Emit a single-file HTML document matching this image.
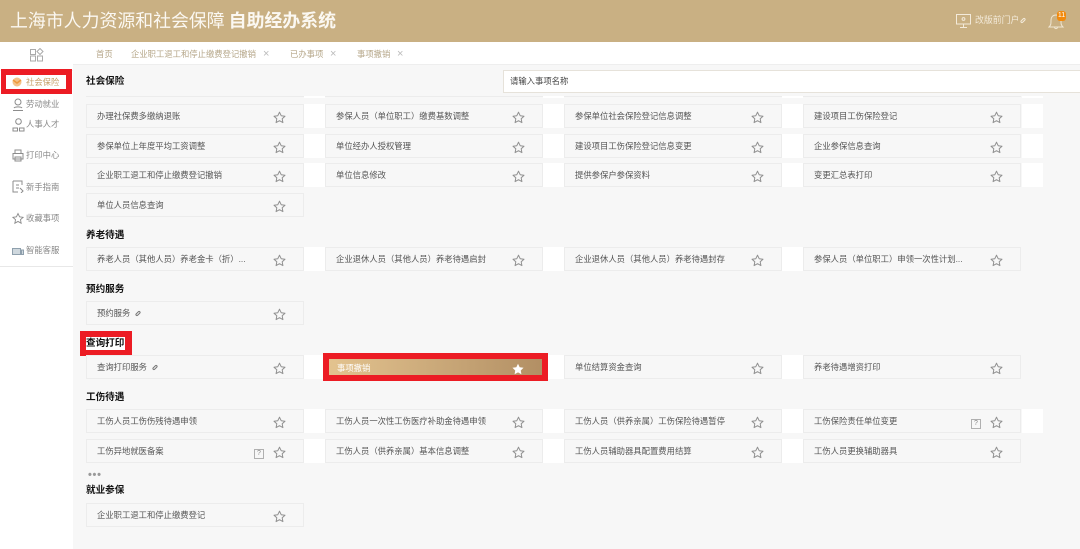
<!DOCTYPE html>
<html lang="zh-CN"><head><meta charset="utf-8"><title>上海市人力资源和社会保障 自助经办系统</title>
<style>
*{box-sizing:border-box}
html,body{margin:0;padding:0}
html{background:#f7f7f7}
body{width:1080px;height:549px;overflow:hidden;position:relative;background:#f7f7f7;font-family:"Liberation Sans","Noto Sans CJK SC",sans-serif;color:#555;font-size:8.33px;filter:blur(.35px)}
.a,.s,.c,.h,.n,.w,.t{position:absolute}
.hd{position:absolute;left:0;top:0;width:1080px;height:42px;background:#c9b083;color:#fff}
.side{position:absolute;left:0;top:42px;width:73px;height:507px;background:#fff}
.tabs{position:absolute;left:73px;top:42px;width:1007px;height:23px;background:#fff;border-bottom:1px solid #eeeeee}
.c{width:218px;height:24px;background:#f7f7f7;border:1px solid #ececec;line-height:23px;padding-left:10px;white-space:nowrap;color:#555}
.c svg{position:absolute;left:186px;top:6px;width:13px;height:13px}
.w{width:21px;height:24px;background:#fff}
.h{left:86px;font-size:9.6px;font-weight:bold;color:#111;line-height:14px;white-space:nowrap;margin-top:1px}
.n{left:26px;color:#888;line-height:12px;white-space:nowrap}
.t{top:48px;color:#b5a688;line-height:12px;white-space:nowrap}
.x{color:#bbb;font-size:11px;font-weight:normal}
.q{position:absolute;width:10px;height:10px;top:8px;border:1px solid #b0b0b0;font-size:7px;line-height:8px;text-align:center;color:#888;padding:0}
.li{display:inline-block;width:6px;height:3px;border:1px solid #777;border-radius:2px;transform:rotate(-45deg);margin-left:5px;vertical-align:1px}
.bx{position:absolute;background:#ec1c24}
svg.i{position:absolute;fill:none;stroke:#8c8c8c;stroke-width:1}
</style></head><body>
<svg width="0" height="0" style="position:absolute"><defs><path id="st" d="M6.500 1.200l1.700 3.500 3.800.5-2.800 2.600.7 3.800-3.400-1.900-3.400 1.900.7-3.800L1 5.200l3.800-.5z" fill="none" stroke="#909090" stroke-width="1" stroke-linejoin="round"/></defs></svg>

<div class="hd">
<div class="a" style="left:10px;top:9px;font-size:17.9px;line-height:24px;white-space:nowrap;color:#fbf8f2">上海市人力资源和社会保障 <b style="margin-left:-1px">自助经办系统</b></div>
<svg class="a" style="left:956px;top:13px" width="16" height="16" viewBox="0 0 16 16" fill="none" stroke="#f3eada"><rect x=".5" y="1.500" width="14" height="9.500"/><circle cx="7.500" cy="6" r="1.400"/><path d="M7.500 11v3M4 14.500h7"/></svg>
<div class="a" style="left:975px;top:14px;line-height:12px;font-size:8.9px;color:#f3eada;white-space:nowrap">改版前门户<span class="li" style="border-color:#f3eada;margin-left:1px;vertical-align:1px"></span></div>
<svg class="a" style="left:1048px;top:12px" width="17" height="18" viewBox="0 0 17 18" fill="none" stroke="#f0e6d2"><path d="M1 15c2-2 2-3 2-6.500C3 5 5 3 8 3s5 2 5 5.500c0 3.500 0 4.500 2 6.500zM6.500 15.500c.5 1.500 2.500 1.500 3 0"/></svg>
<div class="a" style="left:1057px;top:11px;width:9px;height:10px;border-radius:3px;background:#f18a0e;color:#fff;font-size:7px;line-height:10px;text-align:center">11</div>
</div>

<div class="side">
<svg class="a" style="left:30px;top:6px" width="14" height="14" viewBox="0 0 14 14" fill="none" stroke="#aaa"><rect x=".5" y="1.500" width="5" height="5"/><rect x=".5" y="8" width="5" height="5"/><rect x="7.500" y="8" width="5" height="5"/><path d="M10 .5l3 3-3 3-3-3z"/></svg>
<div class="a" style="left:0;top:28px;width:73px;height:1px;background:#f3f3f3"></div>
<div class="a" style="left:0;top:224px;width:73px;height:1px;background:#e8e8e8"></div>
</div>

<div class="bx" style="left:1px;top:69px;width:71px;height:25px"></div>
<div class="a" style="left:6px;top:75px;width:60px;height:14px;background:#fff"></div>
<svg class="a" style="left:11px;top:76px" width="12" height="12" viewBox="0 0 12 12"><circle cx="6" cy="6" r="4.500" fill="#f3c38a"/><path d="M2 4l4 3 4-3" stroke="#ef9a3c" stroke-width="1.500" fill="none"/></svg>
<div class="n" style="top:76px;color:#c5a06a">社会保险</div>
<div class="n" style="top:98px">劳动就业</div>
<div class="n" style="top:118px">人事人才</div>
<div class="n" style="top:149px">打印中心</div>
<div class="n" style="top:181px">新手指南</div>
<div class="n" style="top:212px">收藏事项</div>
<div class="n" style="top:244px">智能客服</div>
<svg class="i" style="left:12px;top:98px" width="12" height="13" viewBox="0 0 12 13"><circle cx="6" cy="4" r="3"/><path d="M1 12.500h10M2 10c1-1.500 7-1.500 8 0"/></svg>
<svg class="i" style="left:12px;top:118px" width="13" height="14" viewBox="0 0 13 14"><circle cx="6.500" cy="3.500" r="2.800"/><path d="M1 13V10h4.500v3zM7.500 13V10H12v3z"/></svg>
<svg class="i" style="left:12px;top:149px" width="12" height="13" viewBox="0 0 12 13"><path d="M3 4V1h6v3M1 10V4.500h10V10zM3 8h6v4H3z"/></svg>
<svg class="i" style="left:12px;top:180px" width="12" height="13" viewBox="0 0 12 13"><path d="M1 1h9v4M1 1v11h5M4 5h3M4 8h3M8 8l3 3-2 2"/></svg>
<svg class="i" style="left:12px;top:212px" width="12" height="13" viewBox="0 0 13 13"><path d="M6.500 1.200l1.700 3.500 3.800.5-2.800 2.600.7 3.800-3.400-1.900-3.400 1.900.7-3.800L1 5.200l3.800-.5z"/></svg>
<svg class="i" style="left:12px;top:246px;stroke:#8fa0ad" width="12" height="11" viewBox="0 0 12 11"><path d="M.5 2.500h8v6h-8zM9.500 4h2v4.500h-2z" fill="#cfd8de"/></svg>

<div class="tabs"></div>
<div class="t" style="left:96px">首页</div>
<div class="t" style="left:131px">企业职工退工和停止缴费登记撤销</div>
<div class="t x" style="left:263px">×</div>
<div class="t" style="left:290px">已办事项</div>
<div class="t x" style="left:330px">×</div>
<div class="t" style="left:357px">事项撤销</div>
<div class="t x" style="left:397px">×</div>

<div class="h" style="top:74px">社会保险</div>
<div class="a" style="left:503px;top:70px;width:577px;height:23px;background:#fff;border:1px solid #e6e2da;border-right:0;padding-left:6px;line-height:21px;color:#444">请输入事项名称</div>

<div class="a" style="left:86px;top:96px;width:218px;height:1px;background:#ececec"></div>
<div class="a" style="left:325px;top:96px;width:218px;height:1px;background:#ececec"></div>
<div class="a" style="left:564px;top:96px;width:218px;height:1px;background:#ececec"></div>
<div class="a" style="left:803px;top:96px;width:218px;height:1px;background:#ececec"></div>
<div class="w" style="left:304px;top:96px;height:2px"></div><div class="w" style="left:543px;top:96px;height:2px"></div><div class="w" style="left:782px;top:96px;height:2px"></div><div class="w" style="left:1022px;top:96px;height:2px"></div>

<!-- white strips -->
<div class="w" style="left:304px;top:104px"></div><div class="w" style="left:543px;top:104px"></div><div class="w" style="left:782px;top:104px"></div><div class="w" style="left:1022px;top:104px"></div>
<div class="w" style="left:304px;top:134px"></div><div class="w" style="left:543px;top:134px"></div><div class="w" style="left:782px;top:134px"></div><div class="w" style="left:1022px;top:134px"></div>
<div class="w" style="left:304px;top:163px"></div><div class="w" style="left:543px;top:163px"></div><div class="w" style="left:782px;top:163px"></div><div class="w" style="left:1022px;top:163px"></div>
<div class="w" style="left:304px;top:247px"></div><div class="w" style="left:543px;top:247px"></div><div class="w" style="left:782px;top:247px"></div>
<div class="w" style="left:304px;top:355px"></div><div class="w" style="left:543px;top:355px"></div><div class="w" style="left:782px;top:355px"></div>
<div class="w" style="left:304px;top:409px"></div><div class="w" style="left:543px;top:409px"></div><div class="w" style="left:782px;top:409px"></div><div class="w" style="left:1022px;top:409px"></div>
<div class="w" style="left:304px;top:439px"></div><div class="w" style="left:543px;top:439px"></div><div class="w" style="left:782px;top:439px"></div>

<div class="c" style="left:86px;top:104px">办理社保费多缴纳退账<svg viewBox="0 0 13 13"><use href="#st"/></svg></div>
<div class="c" style="left:325px;top:104px">参保人员（单位职工）缴费基数调整<svg viewBox="0 0 13 13"><use href="#st"/></svg></div>
<div class="c" style="left:564px;top:104px">参保单位社会保险登记信息调整<svg viewBox="0 0 13 13"><use href="#st"/></svg></div>
<div class="c" style="left:803px;top:104px">建设项目工伤保险登记<svg viewBox="0 0 13 13"><use href="#st"/></svg></div>

<div class="c" style="left:86px;top:134px">参保单位上年度平均工资调整<svg viewBox="0 0 13 13"><use href="#st"/></svg></div>
<div class="c" style="left:325px;top:134px">单位经办人授权管理<svg viewBox="0 0 13 13"><use href="#st"/></svg></div>
<div class="c" style="left:564px;top:134px">建设项目工伤保险登记信息变更<svg viewBox="0 0 13 13"><use href="#st"/></svg></div>
<div class="c" style="left:803px;top:134px">企业参保信息查询<svg viewBox="0 0 13 13"><use href="#st"/></svg></div>

<div class="c" style="left:86px;top:163px">企业职工退工和停止缴费登记撤销<svg viewBox="0 0 13 13"><use href="#st"/></svg></div>
<div class="c" style="left:325px;top:163px">单位信息修改<svg viewBox="0 0 13 13"><use href="#st"/></svg></div>
<div class="c" style="left:564px;top:163px">提供参保户参保资料<svg viewBox="0 0 13 13"><use href="#st"/></svg></div>
<div class="c" style="left:803px;top:163px">变更汇总表打印<svg viewBox="0 0 13 13"><use href="#st"/></svg></div>

<div class="c" style="left:86px;top:193px">单位人员信息查询<svg viewBox="0 0 13 13"><use href="#st"/></svg></div>

<div class="h" style="top:228px">养老待遇</div>
<div class="c" style="left:86px;top:247px">养老人员（其他人员）养老金卡（折）...<svg viewBox="0 0 13 13"><use href="#st"/></svg></div>
<div class="c" style="left:325px;top:247px">企业退休人员（其他人员）养老待遇启封<svg viewBox="0 0 13 13"><use href="#st"/></svg></div>
<div class="c" style="left:564px;top:247px">企业退休人员（其他人员）养老待遇封存<svg viewBox="0 0 13 13"><use href="#st"/></svg></div>
<div class="c" style="left:803px;top:247px">参保人员（单位职工）申领一次性计划...<svg viewBox="0 0 13 13"><use href="#st"/></svg></div>

<div class="h" style="top:282px">预约服务</div>
<div class="c" style="left:86px;top:301px">预约服务<span class="li"></span><svg viewBox="0 0 13 13"><use href="#st"/></svg></div>

<div class="bx" style="left:80px;top:331px;width:52px;height:25px"></div>
<div class="a" style="left:86px;top:337px;width:39px;height:13px;background:#fff"></div>
<div class="h" style="top:336px">查询打印</div>

<div class="c" style="left:86px;top:355px">查询打印服务<span class="li"></span><svg viewBox="0 0 13 13"><use href="#st"/></svg></div>
<div class="bx" style="left:323px;top:353px;width:225px;height:28px"></div>
<div class="a" style="left:329px;top:359px;width:213px;height:16px;background:linear-gradient(90deg,#e3c38f,#b28f64);color:#fff;padding-left:8px;line-height:18px">事项撤销<svg style="position:absolute;left:183px;top:4px" width="12" height="12" viewBox="0 0 13 13"><path d="M6.500 .8l1.800 3.800 4.200.6-3 2.900.7 4.100-3.700-2-3.700 2 .7-4.100-3-2.900 4.200-.6z" fill="#fff"/></svg></div>
<div class="c" style="left:564px;top:355px">单位结算资金查询<svg viewBox="0 0 13 13"><use href="#st"/></svg></div>
<div class="c" style="left:803px;top:355px">养老待遇增资打印<svg viewBox="0 0 13 13"><use href="#st"/></svg></div>

<div class="h" style="top:390px">工伤待遇</div>
<div class="c" style="left:86px;top:409px">工伤人员工伤伤残待遇申领<svg viewBox="0 0 13 13"><use href="#st"/></svg></div>
<div class="c" style="left:325px;top:409px">工伤人员一次性工伤医疗补助金待遇申领<svg viewBox="0 0 13 13"><use href="#st"/></svg></div>
<div class="c" style="left:564px;top:409px">工伤人员（供养亲属）工伤保险待遇暂停<svg viewBox="0 0 13 13"><use href="#st"/></svg></div>
<div class="c" style="left:803px;top:409px">工伤保险责任单位变更<span class="q" style="left:167px;top:9px">?</span><svg viewBox="0 0 13 13"><use href="#st"/></svg></div>

<div class="c" style="left:86px;top:439px">工伤异地就医备案<span class="q" style="left:167px;top:9px">?</span><svg viewBox="0 0 13 13"><use href="#st"/></svg></div>
<div class="c" style="left:325px;top:439px">工伤人员（供养亲属）基本信息调整<svg viewBox="0 0 13 13"><use href="#st"/></svg></div>
<div class="c" style="left:564px;top:439px">工伤人员辅助器具配置费用结算<svg viewBox="0 0 13 13"><use href="#st"/></svg></div>
<div class="c" style="left:803px;top:439px">工伤人员更换辅助器具<svg viewBox="0 0 13 13"><use href="#st"/></svg></div>

<div class="a" style="left:88px;top:471px;color:#999;font-size:11px;line-height:8px;letter-spacing:.7px;font-weight:bold">•••</div>
<div class="h" style="top:483px">就业参保</div>
<div class="c" style="left:86px;top:503px">企业职工退工和停止缴费登记<svg viewBox="0 0 13 13"><use href="#st"/></svg></div>
</body></html>
